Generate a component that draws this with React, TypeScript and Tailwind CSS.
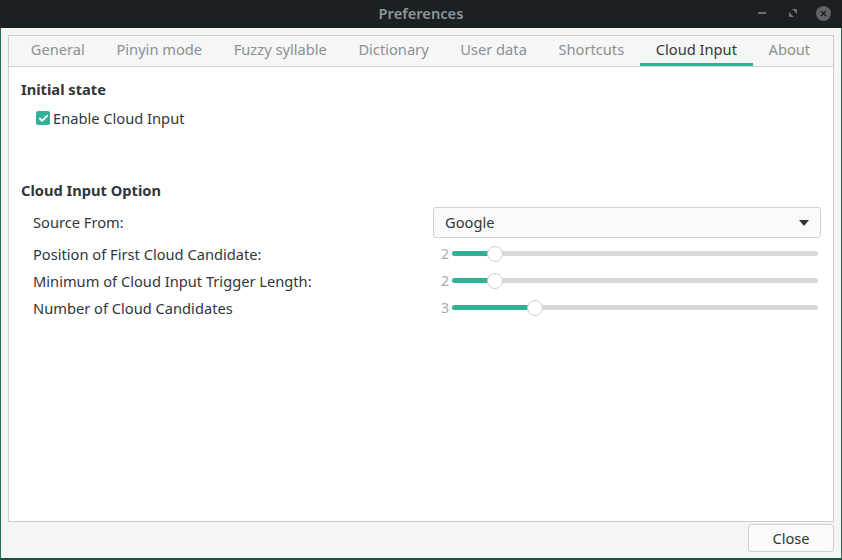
import { Check } from 'lucide-react';

const tabs = ['General', 'Pinyin mode', 'Fuzzy syllable', 'Dictionary', 'User data', 'Shortcuts', 'Cloud Input', 'About'];

const sliders = [
  { label: 'Position of First Cloud Candidate:', value: 2 },
  { label: 'Minimum of Cloud Input Trigger Length:', value: 2 },
  { label: 'Number of Cloud Candidates', value: 3 },
];

const App = () => {
  return (
    <div
      className="w-[842px] h-[560px] flex flex-col bg-[#1b2022] text-[14.67px] text-[#31363b] overflow-hidden"
      style={{ fontFamily: '"Noto Sans", "Open Sans", sans-serif' }}
    >
      {/* Title bar */}
      <div className="h-[28px] flex items-center relative shrink-0">
        <div className="flex-1 text-center font-semibold text-[#8f9597] -mt-[3px]">Preferences</div>
        <div className="absolute right-[11px] top-0 h-full flex items-center gap-[18px] -mt-[1px]">
          <div className="w-[8px] h-[2px] bg-[#6c7173]" />
          <svg width="10" height="10" viewBox="0 0 10 10" className="ml-[4px]">
            <path d="M4 1h5v5z" fill="#6c7173" />
            <path d="M1 4v5h5z" fill="#6c7173" />
          </svg>
          <div className="w-[15px] h-[15px] rounded-full bg-[#5f6466] flex items-center justify-center">
            <svg width="7" height="7" viewBox="0 0 7 7">
              <path d="M1 1l5 5M6 1l-5 5" stroke="#1b2022" strokeWidth="1.6" />
            </svg>
          </div>
        </div>
      </div>

      {/* Body */}
      <div className="flex-1 flex flex-col bg-[#f5f5f5] border-x border-b-2 border-x-[#2a6d57] border-b-[#1b5143] px-[7px] pt-[7px]">
        <div className="h-[487px] flex flex-col border border-[#cdcdcd] bg-white">
          {/* Tabs */}
          <div className="h-[31px] flex items-stretch bg-[#f6f6f6] border-b border-[#d2d2d2] pl-[6px] shrink-0 whitespace-nowrap">
            {tabs.map((t) => (
              <div
                key={t}
                className={
                  t === 'Cloud Input'
                    ? 'px-[15.8px] flex items-center text-[#31363b] border-b-[3px] border-[#2eb398] pb-[1px]'
                    : 'px-[15.8px] flex items-center text-[#8c9092] pb-[4px]'
                }
              >
                {t}
              </div>
            ))}
          </div>

          {/* Content */}
          <div className="flex-1 flex flex-col pl-[12px] pr-[12px] pt-[12px]">
            <div className="h-[20px] leading-[20px] font-bold">Initial state</div>
            <div className="mt-[9px] h-[20px] flex items-center pl-[15px]">
              <div className="w-[14px] h-[14px] rounded-[2px] bg-[#2eb398] flex items-center justify-center">
                <Check size={11} strokeWidth={4} color="white" />
              </div>
              <span className="ml-[3px] leading-[20px]">Enable Cloud Input</span>
            </div>

            <div className="mt-[52px] h-[20px] leading-[20px] font-bold">Cloud Input Option</div>

            <div className="pl-[12px] grid grid-cols-[400px_1fr]">
              <div className="mt-[7px] h-[31px] flex items-center pb-[1px]">Source From:</div>
              <div className="mt-[7px] h-[31px] flex items-center justify-between border border-[#d0d0d0] rounded-[3px] bg-[#fafafa] pl-[11px] pr-[11px]">
                <span className="-mt-[1px]">Google</span>
                <svg width="10" height="6" viewBox="0 0 10 6">
                  <path d="M0 0h10L5 6z" fill="#31363b" />
                </svg>
              </div>

              {sliders.map((s, i) => {
                const fill = 43 + (s.value - 2) * 40;
                return (
                  <div key={s.label} className="contents">
                    <div className={`${i === 0 ? 'mt-[2px]' : ''} h-[27px] flex items-center`}>{s.label}</div>
                    <div className={`${i === 0 ? 'mt-[2px]' : ''} h-[27px] flex items-center pl-[8px] pr-[3px]`}>
                      <span className="w-[11px] text-[14px] text-[#aaaaaa]">{s.value}</span>
                      <div className="flex-1 h-[5px] rounded-full bg-[#d8d8d8] relative">
                        <div className="absolute left-0 top-0 h-full rounded-full bg-[#2eb398]" style={{ width: fill }} />
                        <div
                          className="absolute top-1/2 -translate-y-1/2 -translate-x-1/2 w-[16px] h-[16px] rounded-full bg-white border border-[#cfcfcf]"
                          style={{ left: fill }}
                        />
                      </div>
                    </div>
                  </div>
                );
              })}
            </div>
          </div>
        </div>

        {/* Buttons */}
        <div className="flex justify-end mt-[2px]">
          <button className="w-[86px] h-[28px] rounded-[3px] border border-[#cfcfcf] bg-[#fafafa] text-[#31363b]">
            Close
          </button>
        </div>
      </div>
    </div>
  );
};

export default App;
